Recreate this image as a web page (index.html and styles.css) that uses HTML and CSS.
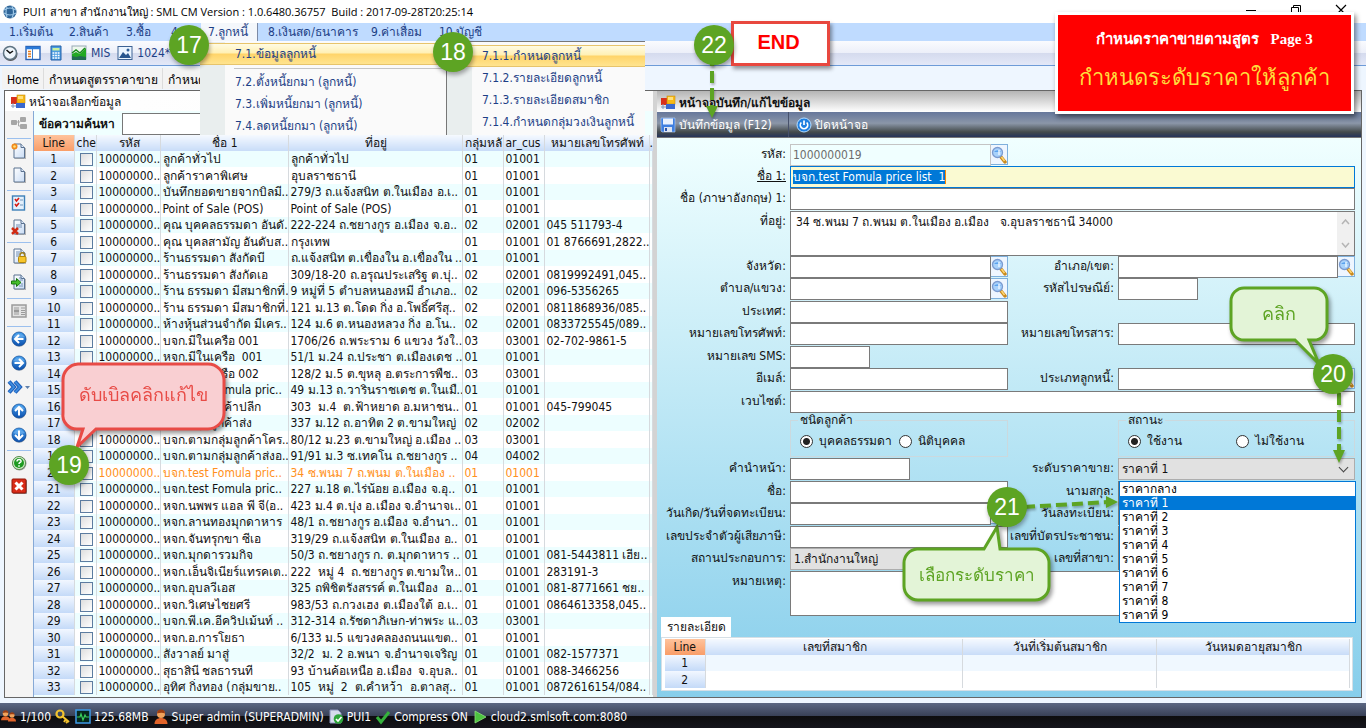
FILE: index.html
```html
<!DOCTYPE html>
<html lang="th">
<head>
<meta charset="utf-8">
<title>PUI1 สาขา สำนักงานใหญ่</title>
<link rel="stylesheet" href="styles.css">
</head>
<body>
<svg class="defs" width="0" height="0" aria-hidden="true">
  <defs>
    <linearGradient id="blue" x2="0" y2="1"><stop offset="0" stop-color="#4aa3ee"/><stop offset="1" stop-color="#0b4fae"/></linearGradient>
    <linearGradient id="paper" x2="1" y2="1"><stop offset="0" stop-color="#fff"/><stop offset="1" stop-color="#c9dcf5"/></linearGradient>
    <symbol id="doc" viewBox="0 0 16 16"><path d="M3 1h7l3.500 3.500V15H3z" fill="url(#paper)" stroke="#5b7290"/><path d="M10 1v3.500h3.500" fill="#dfeafa" stroke="#5b7290"/><path d="M14.500 5v10.800H4" fill="none" stroke="#777" stroke-opacity=".5"/></symbol>
    <symbol id="lens" viewBox="0 0 16 18"><path d="M10 11l4 5" stroke="#c98a1c" stroke-width="3.500" stroke-linecap="round"/><path d="M10.500 11l3 4" stroke="#ffd873" stroke-width="1.500"/><circle cx="6.500" cy="6.500" r="5" fill="#a8d2fb" stroke="#7b9bd0" stroke-width="1.300"/><path d="M3 6a4 3.500 0 0 1 7 0z" fill="#5aa3ee"/><path d="M8 4v5" stroke="#e9f5ff" stroke-width="1.500"/></symbol>
    <symbol id="form" viewBox="0 0 16 16"><rect x="1" y="3" width="6" height="7" fill="#d8301c"/><rect x="7" y="1" width="8" height="8" fill="#f7b916" stroke="#c88c10" stroke-width=".6"/><rect x="6" y="9" width="9" height="5" fill="#3a68cf"/><path d="M1 12h5M3 9v5" stroke="#8096bd"/><rect x="8" y="2" width="5" height="3" fill="#ffe07b"/></symbol>
    <symbol id="ball" viewBox="0 0 16 16"><circle cx="8.300" cy="8.800" r="7" fill="#777" opacity=".5"/><circle cx="8" cy="8" r="7" fill="url(#blue)" stroke="#0a4796" stroke-width=".7"/><path d="M2.500 6a6 5 0 0 1 11 0 9 6 0 0 1-11 0z" fill="#9bd0ff" opacity=".4"/></symbol>
    <symbol id="user" viewBox="0 0 16 16"><circle cx="8" cy="5" r="4" fill="#f0a35c"/><path d="M4 4.500a4 4 0 0 1 8 0c-2-1-5-1-8 0z" fill="#9a3d12"/><path d="M1.500 15c0-4 3-6 6.500-6s6.500 2 6.500 6z" fill="#e2642a"/></symbol>
  </defs>
</svg>

<div class="app">
  <header class="titlebar">
    <svg width="16" height="16" viewBox="0 0 16 16"><circle cx="8" cy="8" r="6.500" fill="#2f6598"/><path d="M2 6q6-4 12 0M2 9q6 4 12 0M5 3q-2 5 0 10M10 2q3 6 0 12" fill="none" stroke="#9cc6e6" stroke-width="1.200"/></svg>
    <h1>PUI1 สาขา สำนักงานใหญ่ : SML CM Version : 1.0.6480.36757&nbsp; Build : 2017-09-28T20:25:14</h1>
    <div class="window-buttons">
      <button aria-label="Minimize"><svg width="12" height="12"><path d="M1 6.500h10" stroke="#000"/></svg></button>
      <button aria-label="Restore"><svg width="12" height="12"><path d="M1.500 3.500h7v7h-7zM3.500 3.500v-2h7v7h-2" fill="none" stroke="#000"/></svg></button>
      <button aria-label="Close"><svg width="12" height="12"><path d="M1 1l10 10M11 1L1 11" stroke="#000" stroke-width="1.200"/></svg></button>
    </div>
  </header>

  <nav class="menubar">
    <button class="m1">1.เริ่มต้น</button><button class="m2">2.สินค้า</button><button class="m3">3.ซื้อ</button><button class="m4">4.</button><button class="m7 open">7.ลูกหนี้</button><button class="m8">8.เงินสด/ธนาคาร</button><button class="m9">9.ค่าเสื่อม</button><button class="m10">10.บัญชี</button>
  </nav>

  <div class="toolbar">
    <button aria-label="Clock"><svg width="16" height="16" viewBox="0 0 16 16"><circle cx="8.500" cy="9" r="7" fill="#555"/><circle cx="8" cy="8" r="6.500" fill="#eef5fb" stroke="#5f7483" stroke-width="1.500"/><path d="M4.500 5L8 8l3-2" fill="none" stroke="#111" stroke-width="1.500"/></svg></button>
    <button aria-label="Panel"><svg width="16" height="16" viewBox="0 0 16 16"><rect x="1" y="1.500" width="14" height="13" fill="#fff" stroke="#2a62b4" stroke-width="1.400"/><path d="M1 3h14" stroke="#2a7ad8" stroke-width="2.500"/><path d="M3 6.500h3M3 9h3M3 11.500h3" stroke="#e67a1a" stroke-width="1.500"/><path d="M7.500 4v10" stroke="#3d7fce"/></svg></button>
    <button aria-label="Calculator"><svg width="16" height="16" viewBox="0 0 16 16"><path d="M3 1h10v14H3z" fill="#4b9ce0" stroke="#2461a8"/><path d="M4.500 3h7v2.500h-7z" fill="#c9f0a0"/><path d="M4.500 8h7M4.500 10.500h7M4.500 13h7" stroke="#fff" stroke-width="1.600" stroke-dasharray="1.800 .8"/></svg></button>
    <button><svg width="16" height="16" viewBox="0 0 16 16"><rect x="1" y="1" width="14" height="13" fill="#eef7ee" stroke="#98a9b5"/><path d="M1 9l4-2 4 2 6-6v11H1z" fill="#22a922"/><path d="M1 11l4 1 4-1 6 1v3H1z" fill="#226c52"/><path d="M1 8l4-3 4 3 5-5" fill="none" stroke="#188c1c" stroke-width="1.500"/></svg>MIS</button>
    <button><svg width="16" height="16" viewBox="0 0 16 16"><rect x="1" y="1.500" width="14" height="13" fill="#eaf4ff" stroke="#3c6294"/><path d="M2 13l4-6 3 3 2-2 3 5z" fill="#27558e"/><circle cx="11" cy="5" r="1.500" fill="#315f99"/></svg>1024*</button>
  </div>

  <div class="tabs" role="tablist">
    <button role="tab">Home</button><button role="tab">กำหนดสูตรราคาขาย</button><button role="tab">กำหนดรู</button>
  </div>

  <main class="workspace">
    <section class="picker">
      <h2 class="picker-title"><svg width="16" height="16"><use href="#form"/></svg>หน้าจอเลือกข้อมูล</h2>
      <div class="picker-body">
        <div class="side-tools">
          <div class="group"><button aria-label="Relations"><svg width="16" height="16" viewBox="0 0 16 16" fill="#a6a6a6"><rect x="0" y="5" width="6" height="5" rx="1"/><rect x="9" y="2" width="6" height="5" rx="1"/><rect x="9" y="9" width="7" height="5" rx="1"/><path d="M6 7h3M7.500 5v6h2" stroke="#a6a6a6" fill="none"/></svg></button></div>
          <div class="group">
            <button aria-label="New"><svg width="16" height="16" viewBox="0 0 16 16"><use href="#doc"/><circle cx="3.500" cy="3.500" r="3" fill="#f28a1c"/><circle cx="3.500" cy="3.500" r="1.300" fill="#ffe37a"/></svg></button>
            <button aria-label="Blank"><svg width="16" height="16"><use href="#doc"/></svg></button>
          </div>
          <div class="group">
            <button aria-label="Select"><svg width="16" height="16" viewBox="0 0 16 16"><rect x="1.500" y="1" width="12" height="14" fill="#e3f0fc" stroke="#3e80b8" stroke-width="1.400"/><path d="M4 4l1.500 2L8 3M4 9l1.500 2L8 8" fill="none" stroke="#d61a10" stroke-width="1.600"/><path d="M9 5h3M9 10h3" stroke="#7396ba"/></svg></button>
            <button aria-label="Delete"><svg width="16" height="16" viewBox="0 0 16 16"><use href="#doc"/><path d="M5 6h6M5 8h6" stroke="#7390b6"/><path d="M1 9l6 6M7 9l-6 6" stroke="#d12a12" stroke-width="2.500"/></svg></button>
          </div>
          <div class="group tall">
            <button aria-label="Lock"><svg width="16" height="16" viewBox="0 0 16 16"><use href="#doc"/><path d="M5 4h4M5 6h5M5 8h3" stroke="#7390b6"/><path d="M9 9V7a2.300 2.300 0 0 1 4.600 0v2" fill="none" stroke="#a2821d" stroke-width="1.400"/><rect x="7.500" y="8.500" width="7.500" height="6" rx="1" fill="#f8c62b" stroke="#b2870c"/></svg></button>
            <button aria-label="Import"><svg width="16" height="16" viewBox="0 0 16 16"><use href="#doc"/><path d="M8 4h3M9 6h3M10 10h2M8 12h4" stroke="#7390b6"/><path d="M.500 7h5V4.500L10 8.500l-4.500 4V10h-5z" fill="#45bd2b" stroke="#18760e"/></svg></button>
          </div>
          <div class="group"><button aria-label="Report"><svg width="16" height="16" viewBox="0 0 16 16"><rect x="1" y="2" width="14" height="12" fill="#e3e3e3" stroke="#9b9b9b" stroke-width="1.500"/><path d="M3 5h5M10 5h4M3 11h5M10 7.500h4M10 9.500h4M10 11.500h4" stroke="#9b9b9b"/><rect x="3" y="6.500" width="5" height="3" fill="#999"/></svg></button></div>
          <div class="group">
            <button aria-label="Previous"><svg width="16" height="16" viewBox="0 0 16 16"><use href="#ball"/><path d="M12.500 8H4.500M8 4L4 8l4 4" fill="none" stroke="#fff" stroke-width="2"/></svg></button>
            <button aria-label="Next"><svg width="16" height="16" viewBox="0 0 16 16"><use href="#ball"/><path d="M3.500 8h8M8 4l4 4-4 4" fill="none" stroke="#fff" stroke-width="2"/></svg></button>
            <button class="more" aria-label="Skip"><svg width="24" height="16" viewBox="0 0 24 16"><path d="M2 2.500L7 8l-5 5.500M8 2.500L13 8l-5 5.500" fill="none" stroke="#205fbb" stroke-width="4"/><path d="M2 2.500L7 8l-5 5.500M8 2.500L13 8l-5 5.500" fill="none" stroke="#3f8fe0" stroke-width="1.800"/><path d="M18 7h5l-2.500 3z" fill="#5d7fab"/></svg></button>
            <button aria-label="Up"><svg width="16" height="16" viewBox="0 0 16 16"><use href="#ball"/><path d="M8 12.500v-8M4 8l4-4 4 4" fill="none" stroke="#fff" stroke-width="2"/></svg></button>
            <button aria-label="Down"><svg width="16" height="16" viewBox="0 0 16 16"><use href="#ball"/><path d="M8 3.500v8M4 8l4 4 4-4" fill="none" stroke="#fff" stroke-width="2"/></svg></button>
          </div>
          <div class="group">
            <button aria-label="Help"><svg width="16" height="16" viewBox="0 0 16 16"><circle cx="8.500" cy="8.500" r="7" fill="#999"/><circle cx="8" cy="8" r="6.500" fill="#d8efcf" stroke="#568b4c"/><circle cx="8" cy="8" r="5" fill="#1d9a20"/><path d="M6 6.500c0-3 4.500-2.500 4 0-.3 1-2 1-2 2.500M8 10.200v1.500" fill="none" stroke="#fff" stroke-width="1.500"/></svg></button>
            <button aria-label="Close list"><svg width="16" height="16" viewBox="0 0 16 16"><rect x="2" y="2" width="14" height="14" rx="1" fill="#888"/><rect x="1" y="1" width="14" height="14" rx="1" fill="#d92c18" stroke="#931608"/><path d="M4.500 4.500l7 7M11.500 4.500l-7 7" stroke="#fff" stroke-width="3"/></svg></button>
          </div>
        </div>
        <div class="list">
          <div class="search"><label for="q">ข้อความค้นหา</label><input id="q" type="text"></div>
          <table class="grid">
            <colgroup><col class="c-line"><col class="c-check"><col class="c-code"><col class="c-name"><col class="c-addr"><col class="c-group"><col class="c-group"><col class="c-phone"><col></colgroup>
            <thead><tr><th class="line">Line</th><th class="left">che</th><th>รหัส</th><th>ชื่อ 1</th><th>ที่อยู่</th><th class="left">กลุ่มหลั</th><th class="left">ar_cus</th><th>หมายเลขโทรศัพท์</th><th class="last">.</th></tr></thead>
            <tbody id="rows"></tbody>
          </table>
        </div>
      </div>
    </section>

    <section class="editor">
      <h2 class="editor-title"><svg width="16" height="16"><use href="#form"/></svg>หน้าจอบันทึก/แก้ไขข้อมูล</h2>
      <div class="editor-tools">
        <button class="save"><svg width="16" height="16" viewBox="0 0 16 16"><path d="M1 1h14v14H2l-1-1z" fill="#3f7fe0" stroke="#b7d0f6" stroke-width=".6"/><rect x="3" y="1.500" width="10" height="6" fill="#e9f2ff"/><rect x="4" y="10" width="8" height="5" fill="#dbe4f2"/><rect x="5" y="11" width="2" height="3" fill="#2a53a8"/></svg>บันทึกข้อมูล (F12)</button>
        <button class="exit"><svg width="16" height="16" viewBox="0 0 16 16"><circle cx="8" cy="8" r="7" fill="#1f7fe0" stroke="#b4dcff"/><path d="M5.300 5.500a3.700 3.700 0 1 0 5.400 0M8 3.500V8" fill="none" stroke="#fff" stroke-width="1.700"/></svg>ปิดหน้าจอ</button>
      </div>
      <form class="form">
        <label for="code">รหัส:</label><div class="lookup"><input id="code" type="text" value="1000000019" disabled><button type="button" aria-label="ค้นหา"><svg width="16" height="18"><use href="#lens"/></svg></button></div><i></i><i></i>
        <label for="name1" class="underlined">ชื่อ 1:</label><div class="wide current" id="name1" role="textbox" contenteditable="true"><mark>บจก.test Fomula price list&nbsp; 1</mark></div>
        <label for="name2">ชื่อ (ภาษาอังกฤษ) 1:</label><input id="name2" class="wide" type="text">
        <label for="addr">ที่อยู่:</label><div class="wide area"><textarea id="addr">34 ซ.พนม 7 ถ.พนม ต.ในเมือง อ.เมือง   จ.อุบลราชธานี 34000</textarea><span class="scroll"><svg width="9" height="6"><path d="M1 5l3.500-4L8 5" fill="none" stroke="#b5b5b5" stroke-width="1.500"/></svg><svg width="9" height="6"><path d="M1 1l3.500 4L8 1" fill="none" stroke="#b5b5b5" stroke-width="1.500"/></svg></span></div>
        <label for="prov">จังหวัด:</label><div class="lookup"><input id="prov" type="text"><button type="button" aria-label="ค้นหา"><svg width="16" height="18"><use href="#lens"/></svg></button></div>
        <label for="amp">อำเภอ/เขต:</label><div class="lookup"><input id="amp" type="text"><button type="button" aria-label="ค้นหา"><svg width="16" height="18"><use href="#lens"/></svg></button></div>
        <label for="tam">ตำบล/แขวง:</label><div class="lookup"><input id="tam" type="text"><button type="button" aria-label="ค้นหา"><svg width="16" height="18"><use href="#lens"/></svg></button></div>
        <label for="zip">รหัสไปรษณีย์:</label><input id="zip" class="short" type="text">
        <label for="country">ประเทศ:</label><input id="country" type="text"><i></i><i></i>
        <label for="tel">หมายเลขโทรศัพท์:</label><input id="tel" type="text"><label for="fax">หมายเลขโทรสาร:</label><input id="fax" type="text">
        <label for="sms">หมายเลข SMS:</label><input id="sms" class="short" type="text"><i></i><i></i>
        <label for="mail">อีเมล์:</label><input id="mail" type="text"><label for="type">ประเภทลูกหนี้:</label><div class="lookup"><input id="type" type="text"><button type="button" aria-label="ค้นหา"><svg width="16" height="18"><use href="#lens"/></svg></button></div>
        <label for="web">เวบไซต์:</label><input id="web" class="wide" type="text">
        <i></i><fieldset><legend>ชนิดลูกค้า</legend><div class="radios"><label class="kind"><input type="radio" name="k" checked>บุคคลธรรมดา</label><label><input type="radio" name="k">นิติบุคคล</label></div></fieldset>
        <i></i><fieldset><legend>สถานะ</legend><div class="radios"><label class="state"><input type="radio" name="s" checked>ใช้งาน</label><label><input type="radio" name="s">ไม่ใช้งาน</label></div></fieldset>
        <label for="pre">คำนำหน้า:</label><input id="pre" class="medium" type="text"><label for="level">ระดับราคาขาย:</label>
        <div class="combo"><select id="level"><option>ราคาที่ 1</option></select>
          <ul class="options" role="listbox" aria-label="ระดับราคาขาย"><li role="option">ราคากลาง</li><li role="option" aria-selected="true">ราคาที่ 1</li><li role="option">ราคาที่ 2</li><li role="option">ราคาที่ 3</li><li role="option">ราคาที่ 4</li><li role="option">ราคาที่ 5</li><li role="option">ราคาที่ 6</li><li role="option">ราคาที่ 7</li><li role="option">ราคาที่ 8</li><li role="option">ราคาที่ 9</li></ul></div>
        <label for="first">ชื่อ:</label><input id="first" type="text"><label for="last">นามสกุล:</label><input id="last" type="text">
        <label for="birth">วันเกิด/วันที่จดทะเบียน:</label><div class="lookup"><input id="birth" type="text"><button type="button" aria-label="ปฏิทิน"></button></div><label for="reg">วันลงทะเบียน:</label><input id="reg" type="text">
        <label for="tax">เลขประจำตัวผู้เสียภาษี:</label><input id="tax" type="text"><label for="cid">เลขที่บัตรประชาชน:</label><input id="cid" type="text">
        <label for="office">สถานประกอบการ:</label><select id="office"><option>1.สำนักงานใหญ่</option></select><label for="branch">เลขที่สาขา:</label><input id="branch" type="text">
        <label for="note">หมายเหตุ:</label><textarea id="note" class="wide"></textarea>
      </form>
      <div class="details">
        <button class="detail-tab">รายละเอียด</button>
        <div class="detail-page">
          <table class="grid members">
            <colgroup><col class="c-line"><col class="w40"><col class="w30"><col class="w30"></colgroup>
            <thead><tr><th class="line">Line</th><th>เลขที่สมาชิก</th><th>วันที่เริ่มต้นสมาชิก</th><th>วันหมดอายุสมาชิก</th></tr></thead>
            <tbody><tr><td class="line">1</td><td></td><td></td><td></td></tr><tr><td class="line">2</td><td></td><td></td><td></td></tr></tbody>
          </table>
        </div>
      </div>
    </section>
  </main>

  <footer class="statusbar">
    <span><svg width="16" height="16" viewBox="0 0 16 16"><use href="#user" x="-1" y="0" width="11" height="13"/><use href="#user" x="6" y="2" width="10" height="12"/></svg>1/100</span>
    <span><svg width="16" height="16" viewBox="0 0 16 16"><circle cx="5" cy="5" r="3.500" fill="none" stroke="#f3c22e" stroke-width="2.200"/><path d="M7 7l7 6M11 10l-2 3M13 12l-2 2" stroke="#f3c22e" stroke-width="2"/></svg></span>
    <span><svg width="16" height="16" viewBox="0 0 16 16"><rect x="1" y="1" width="14" height="13" fill="#06281c" stroke="#3f9be8" stroke-width="1.500"/><path d="M2 8h3l1-3 2 6 2-5 1 2h3" fill="none" stroke="#39d05c" stroke-width="1.200"/></svg>125.68MB</span>
    <span><svg width="16" height="16"><use href="#user"/></svg>Super admin (SUPERADMIN)</span>
    <span><svg width="16" height="16" viewBox="0 0 16 16"><path d="M2 1h8l3 3v10H2z" fill="#d5dbec" stroke="#8a93bb"/><circle cx="10.500" cy="10" r="4.800" fill="#2ea53a"/><path d="M8 10l2 2 3.500-4" fill="none" stroke="#fff" stroke-width="1.600"/></svg>PUI1</span>
    <span><svg width="16" height="16" viewBox="0 0 16 16"><path d="M2 8l4 5L14 3" fill="none" stroke="#35b13c" stroke-width="3"/></svg>Compress ON</span>
    <span><svg width="16" height="16" viewBox="0 0 16 16"><path d="M3 2l11 6-11 6z" fill="#4cc43f" stroke="#8fe07f" stroke-width=".8"/></svg>cloud2.smlsoft.com:8080</span>
  </footer>

  <div class="menu menu-main" role="menu">
    <button role="menuitem" class="active">7.1.ข้อมูลลูกหนี้</button><hr>
    <button role="menuitem">7.2.ตั้งหนี้ยกมา (ลูกหนี้)</button>
    <button role="menuitem">7.3.เพิ่มหนี้ยกมา (ลูกหนี้)</button>
    <button role="menuitem">7.4.ลดหนี้ยกมา (ลูกหนี้)</button>
  </div>
  <div class="menu menu-sub" role="menu">
    <button role="menuitem" class="active">7.1.1.กำหนดลูกหนี้</button>
    <button role="menuitem">7.1.2.รายละเอียดลูกหนี้</button>
    <button role="menuitem">7.1.3.รายละเอียดสมาชิก</button>
    <button role="menuitem">7.1.4.กำหนดกลุ่มวงเงินลูกหนี้</button>
  </div>

  <div class="callout double-click"><svg width="174" height="96" viewBox="0 0 174 96"><path d="M20 5H150A16 16 0 0 1 166 21V54A16 16 0 0 1 150 70H38L19 88L25 70H20A14 14 0 0 1 5 54V21A16 16 0 0 1 20 5Z" fill="#f9cfd2" stroke="#e84b46" stroke-width="3"/></svg><p>ดับเบิลคลิกแก้ไข</p></div>
  <div class="callout click"><svg width="112" height="86" viewBox="0 0 112 86"><path d="M18 5H88A13 13 0 0 1 101 18V44A13 13 0 0 1 88 57H83L93 81L69 57H18A13 13 0 0 1 5 44V18A13 13 0 0 1 18 5Z" fill="#e3f4d7" stroke="#5da423" stroke-width="3"/></svg><p>คลิก</p></div>
  <div class="callout choose"><svg width="160" height="90" viewBox="0 0 160 90"><path d="M18 26H85L98 4L101 26H136A14 14 0 0 1 150 40V63A14 14 0 0 1 136 77H19A14 14 0 0 1 5 63V40A14 14 0 0 1 18 26Z" fill="#e3f4d7" stroke="#5da423" stroke-width="3"/></svg><p>เลือกระดับราคา</p></div>
  <svg class="arrow arrow-save" width="14" height="68" viewBox="0 0 14 68"><path d="M7 0V54" stroke="#5da423" stroke-width="4" stroke-dasharray="12 5"/><path d="M1 52h12L7 64z" fill="#5da423"/></svg>
  <svg class="arrow arrow-level" width="14" height="72" viewBox="0 0 14 72"><path d="M7 0V60" stroke="#5da423" stroke-width="4" stroke-dasharray="12 5"/><path d="M1 57h12L7 70z" fill="#5da423"/></svg>
  <svg class="arrow arrow-option" width="96" height="16" viewBox="0 0 96 16"><path d="M0 10L84 5" stroke="#5da423" stroke-width="4" stroke-dasharray="11 5"/><path d="M82 -1l12 6-12 6z" fill="#5da423"/></svg>
  <b class="step s17">17</b><b class="step s18">18</b><b class="step s19">19</b><b class="step s20">20</b><b class="step s21">21</b><b class="step s22">22</b>
  <div class="end">END</div>
  <div class="banner"><p>กำหนดราคาขายตามสูตร &nbsp; Page 3</p><p class="topic">กำหนดระดับราคาให้ลูกค้า</p></div>
</div>
<script src="rows.js"></script>
</body>
</html>
```
FILE: styles.css
```css
* { box-sizing: border-box; }
body { margin: 0; font: 12px/16px "DejaVu Sans Condensed", "Noto Sans", sans-serif; color: #111; overflow: hidden; }
button, input, select, textarea { font: inherit; color: inherit; margin: 0; border-radius: 0; }
button { background: none; border: 0; padding: 0; white-space: nowrap; }
p, h1, h2, ul { margin: 0; padding: 0; font: inherit; list-style: none; }
svg { flex: none; }
.defs { position: absolute; }
.app { position: relative; height: 100vh; display: flex; flex-direction: column; background: #eef6ff; overflow: hidden; }

.titlebar { flex: none; height: 23px; background: #fff; display: flex; align-items: center; padding: 0 19px 0 2px; gap: 5px; }
.titlebar h1 { font: 11px/20px "Open Sans", sans-serif; flex: 1; white-space: nowrap; color: #000; }
.window-buttons { display: flex; gap: 33px; align-self: flex-start; padding-top: 4px; }
.window-buttons button { height: 12px; }
.window-buttons svg { display: block; }

.menubar { flex: none; height: 18px; background: #bfdbff; color: #1d3f86; display: flex; padding-left: 9px; overflow: hidden; }
.menubar button { text-align: left; line-height: 18px; }
.menubar .m1 { width: 60px; }
.menubar .m2 { width: 57px; }
.menubar .m3 { width: 45px; }
.menubar .m4 { width: 30px; }
.menubar .m7 { width: 57px; }
.menubar .m8 { width: 113px; padding-left: 10px; }
.menubar .m9 { width: 68px; }
.menubar .open { background: #f4f7fb; padding-left: 7px; border-right: 1px solid #7c8aa5; }

.toolbar { flex: none; height: 25px; display: flex; align-items: center; gap: 7px; padding-left: 2px; color: #1d3f86; border-bottom: 1px solid #6d9bd8; background: linear-gradient(#fafbfe, #eceff9 50%, #d5dbee 52%, #e3e8f8); }
.toolbar button { display: flex; align-items: center; gap: 4px; }

.tabs { flex: none; height: 23px; display: flex; background: #eef6ff; padding-left: 2px; }
.tabs button { height: 21px; margin-top: 2px; padding: 3px 4px 0 5px; background: #f3f3f3; border-right: 1px solid #dcdcdc; color: #000; }

.workspace { flex: 1; min-height: 0; display: flex; margin: 1px 4px 0; border: 1px solid #666; background: #f0f0f0; }
.picker { flex: none; width: 648px; display: flex; flex-direction: column; background: #f0ffff; overflow: hidden; }
.picker-title { flex: none; height: 20px; display: flex; align-items: center; gap: 3px; padding: 2px 0 0 5px; background: linear-gradient(90deg, #fff, #fafafa); }
.picker-body { flex: 1; min-height: 0; display: flex; }
.side-tools { flex: none; width: 29px; background: #f4f4f4; border-right: 1px solid #86a9d6; padding-left: 2px; }
.group { display: flex; flex-direction: column; padding: 0 0 3px; border-bottom: 1px solid #9cc0ee; width: 24px; }
.group:last-child { border: 0; }
.group button { height: 24px; display: flex; align-items: center; justify-content: center; }
.group:last-child button { height: 23px; }
.group.tall button { height: 26px; }
.group .more { justify-content: flex-start; }
.list { flex: 1; min-width: 0; }
.search { height: 24px; display: flex; align-items: center; padding: 1px 0 0 5px; gap: 7px; font-weight: bold; }
.search input { width: 300px; height: 22px; border: 1px solid #777; background: #fff; }

.grid { width: 100%; table-layout: fixed; border-collapse: collapse; }
.grid th, .grid td { padding: 0 0 0 2px; height: 16px; line-height: 16px; white-space: nowrap; overflow: hidden; border-right: 1px solid #d6dade; text-align: left; }
.grid th { font-weight: normal; text-align: center; background: linear-gradient(#f5f9ff, #c8dcf8); }
.grid th.left { text-align: left; }
.grid th.last { padding: 0; border: 0; }
.grid th.line { background: linear-gradient(#ffc39c, #f99d68); }
.grid .line { text-align: center; padding: 0; }
.grid td.line { background: linear-gradient(#f2f7ff, #c4daf8); }
.grid tbody tr { background: #fff; }
.grid tbody tr:nth-child(odd) { background: #edfeff; }
.grid tbody tr:nth-child(even) td { height: 17px; }
.grid .chosen td:not(.line) { color: #ff9020; }
.grid input { appearance: none; display: block; width: 13px; height: 13px; margin: 1px 0 0 3px; border: 1px solid #5c7ca0; background: linear-gradient(135deg, #dedede, #fff); }
.c-line { width: 40px; }
.c-check { width: 22px; }
.c-code { width: 64px; }
.c-name { width: 128px; }
.c-addr { width: 174px; }
.c-group { width: 41px; }
.c-phone { width: 105px; }

.editor { flex: 1; min-width: 0; display: flex; flex-direction: column; border-left: 4px solid #d3d3d3; background: linear-gradient(#f0ffff 8%, #87ceeb); }
.editor-title { flex: none; height: 21px; display: flex; align-items: center; gap: 3px; padding: 2px 0 0 3px; font-weight: bold; background: linear-gradient(#b4b4b4, #fff); }
.editor-tools { flex: none; height: 26px; display: flex; color: #fff; background: linear-gradient(#66779b, #8b96a8 45%, #444b4c 80%, #26345a); border-bottom: 1px solid #777; }
.editor-tools button { display: flex; align-items: center; gap: 3px; padding-left: 3px; }
.editor-tools .save { width: 132px; border-right: 1px solid #47516b; }
.editor-tools .exit { padding-left: 7px; }

.form { flex: none; display: grid; grid-template-columns: 133px 218fr 110px 237fr; grid-template-rows: 22px 22px 23px 45px 22px 23px 22px 23px 22px 23px 22px 45px 23px 22px 23px 22px 23px 46px; padding: 6px 6px 0 0; }
.form > label { text-align: right; padding: 2px 4px 0 0; white-space: nowrap; }
.form .underlined { text-decoration: underline; }
.form > input, .form select, .form .area, .form > textarea, .current { width: 100%; height: 22px; border: 1px solid #7a7a7a; background: #fff; padding: 0 3px; min-width: 0; }
.form .wide { grid-column: 2 / 5; }
.form .short { width: 80px; }
.form .medium { width: 120px; }
.form .current { background: #fafad2; border-color: #0078d7; padding: 2px; white-space: nowrap; outline: 0; }
.current mark { background: #0078d7; color: #fff; border-right: 1px solid #f80; }
.form .area { height: 45px; padding: 0; display: flex; }
.area textarea { flex: 1; border: 0; padding: 2px 5px; resize: none; outline: 0; }
.scroll { width: 17px; background: #f0f0f0; display: flex; flex-direction: column; justify-content: space-between; align-items: center; padding: 7px 0; }
.form > textarea { height: 45px; resize: none; }
.lookup { display: flex; min-width: 0; height: 22px; }
.lookup input { flex: 1; min-width: 0; border: 1px solid #7a7a7a; background: #fff; padding: 0 2px; }
.lookup input:disabled { background: #f0ffff; border-color: #c4c4c4; color: #6d6d6d; }
.lookup button { width: 17px; height: 21px; background: #eef6ff; border: 1px solid #7eb0dc; border-left: 0; }
.lookup svg { display: block; }
fieldset { margin: 0; min-width: 0; height: 44px; border: 1px solid #cbd9de; padding: 0 0 0 9px; }
legend { padding: 0 2px; line-height: 14px; margin-left: -2px; }
.radios { display: flex; padding-top: 6px; }
.radios label { display: flex; align-items: center; gap: 6px; white-space: nowrap; }
.radios .kind { width: 99px; }
.radios .state { width: 108px; }
.radios input { appearance: none; width: 13px; height: 13px; border: 1px solid #333; border-radius: 50%; background: #fff; }
.radios input:checked { background: radial-gradient(#222 0 3px, #fff 4px); }
.form select { appearance: none; background: #e1e1e1; border-color: #adadad; }
.combo { position: relative; }
.combo::after { content: ""; position: absolute; right: 8px; top: 6px; width: 6px; height: 6px; border: solid #444; border-width: 0 1px 1px 0; transform: rotate(45deg); }
.options { position: absolute; z-index: 2; left: 1px; right: -1px; top: 23px; border: 1px solid #0078d7; background: #fff; color: #000; }
.options li { height: 14px; line-height: 14px; padding-left: 2px; }
.options [aria-selected] { background: #0078d7; color: #fff; }

.details { padding: 0 8px 0 4px; }
.detail-tab { display: block; height: 20px; width: 70px; background: #fff; }
.detail-page { background: #fff; border: 1px solid #d5dfe6; padding: 1px 2px 2px 3px; }
.members tbody tr:nth-child(odd) { background: #f0f8ff; }
.w40 { width: 40%; }
.w30 { width: 30%; }

.statusbar { flex: none; height: 25px; margin-top: 5px; display: flex; align-items: center; color: #fff; padding: 3px 0 0 1px; background: linear-gradient(#5b6783, #3a4258 50%, #0d0d0e 52%, #15151c); white-space: nowrap; }
.statusbar span { display: flex; align-items: center; gap: 3px; margin-right: 4px; }

.menu { position: absolute; z-index: 3; overflow: hidden; background: linear-gradient(90deg, #e9eeee 25px, #fafafa 25px); color: #1d3f86; }
.menu button { display: block; width: 100%; height: 22px; text-align: left; padding-left: 35px; }
.menu .active { background: linear-gradient(#fffbe3, #fff0b4 45%, #ffd469 50%, #ffe48f); border: 1px solid #e7c46b; border-width: 1px 0; }
.menu hr { margin: 3px 0 2px 34px; border: 0; border-top: 1px solid #c5c5c5; height: 1px; }
.menu-main { left: 200px; top: 42px; width: 247px; height: 93px; border-right: 1px solid #777; padding-top: 1px; }
.menu-sub { left: 447px; top: 41px; width: 198px; height: 94px; border-top: 1px solid #777; padding-top: 3px; }

.step { position: absolute; z-index: 6; width: 40px; height: 40px; border-radius: 50%; background: #5da423; color: #fff; font: 23px/40px "Liberation Sans", sans-serif; text-align: center; box-shadow: 1px 3px 4px #0005; }
.s17 { left: 169px; top: 25px; }
.s18 { left: 433px; top: 32px; }
.s19 { left: 49px; top: 445px; }
.s20 { left: 1313px; top: 354px; }
.s21 { left: 987px; top: 487px; }
.s22 { left: 694px; top: 25px; }
.callout { position: absolute; z-index: 5; display: flex; justify-content: center; color: #5da423; font-size: 18px; line-height: 24px; filter: drop-shadow(2px 3px 2px #0006); }
.callout svg { position: absolute; left: 0; top: 0; }
.callout p { position: relative; }
.double-click { left: 58px; top: 359px; width: 170px; padding-top: 24px; color: #e84b46; }
.click { left: 1226px; top: 283px; width: 106px; padding-top: 19px; }
.choose { left: 899px; top: 523px; width: 155px; padding-top: 40px; font-size: 17px; }
.arrow { position: absolute; z-index: 5; filter: drop-shadow(1px 2px 1px #0004); overflow: visible; }
.arrow-save { left: 705px; top: 54px; }
.arrow-level { left: 1332px; top: 393px; }
.arrow-option { left: 1024px; top: 497px; }
.end { position: absolute; z-index: 5; left: 731px; top: 21px; width: 99px; height: 45px; border: 3px solid #e8483f; background: #fff; color: #f00; font: bold 20px/37px "Liberation Sans", sans-serif; text-align: center; padding-right: 4px; box-shadow: 2px 3px 4px #0006; }
.banner { position: absolute; z-index: 5; left: 1055px; top: 12px; width: 299px; height: 102px; border: 3px solid #fff; background: #f00; color: #fff; font: bold 15px/24px "Liberation Serif", serif; text-align: center; padding-top: 12px; box-shadow: 2px 3px 5px #0007; white-space: nowrap; }
.banner .topic { color: #ffdc3c; font-size: 22px; font-weight: normal; line-height: 34px; margin-top: 10px; }
```
FILE: rows.js
```js
const customers = [
  ["ลูกค้าทั่วไป", "ลูกค้าทั่วไป", "01", "01001", ""],
  ["ลูกค้าราคาพิเศษ", "อุบลราชธานี", "01", "01001", ""],
  ["บันทึกยอดขายจากบิลมี..", "279/3 ถ.แจ้งสนิท ต.ในเมือง อ.เ..", "01", "01001", ""],
  ["Point of Sale (POS)", "Point of Sale (POS)", "01", "01001", ""],
  ["คุณ บุคคลธรรมดา อันดั..", "222-224 ถ.ชยางกูร อ.เมือง จ.อ..", "02", "02001", "045 511793-4"],
  ["คุณ บุคลสามัญ อันดับส..", "กรุงเทพ", "01", "01001", "01 8766691,2822.."],
  ["ร้านธรรมดา สังกัดบี", "ถ.แจ้งสนิท ต.เขื่องใน อ.เขื่องใน ..", "01", "01001", ""],
  ["ร้านธรรมดา สังกัดเอ", "309/18-20 ถ.อรุณประเสริฐ ต.บุ่..", "02", "02001", "0819992491,045.."],
  ["ร้าน ธรรมดา มีสมาชิกที่..", "9 หมู่ที่ 5 ตำบลหนองหมี อำเภอ..", "02", "02001", "096-5356265"],
  ["ร้าน ธรรมดา มีสมาชิกที่..", "121 ม.13 ต.โดด กิ่ง อ.โพธิ์ศรีสุ..", "02", "02001", "0811868936/085.."],
  ["ห้างหุ้นส่วนจำกัด มีเคร..", "124 ม.6 ต.หนองหลวง กิ่ง อ.โน..", "02", "02001", "0833725545/089.."],
  ["บจก.มีในเครือ 001", "1706/26 ถ.พระราม 6 แขวง วังใ..", "03", "03001", "02-702-9861-5"],
  ["หจก.มีในเครือ  001", "51/1 ม.24 ถ.ประชา ต.เมืองเดช ..", "01", "01001", ""],
  ["หจก.มีในเครือ 002", "128/2 ม.5 ต.ขุหลุ อ.ตระการพืช..", "03", "03001", ""],
  ["บจก.test Fomula pric..", "49 ม.13 ถ.วารินราชเดช ต.ในเมื..", "01", "01001", ""],
  ["บจก.กลุ่มลูกค้าปลีก", "303  ม.4  ต.ฟ้าหยาด อ.มหาชน..", "01", "01001", "045-799045"],
  ["บจก.กลุ่มลูกค้าส่ง", "337 ม.12 ถ.อาทิต 2 ต.ขามใหญ่  .", "02", "02002", ""],
  ["บจก.ตามกลุ่มลูกค้าโคร..", "80/12 ม.23 ต.ขามใหญ่ อ.เมือง ..", "03", "03001", ""],
  ["บจก.ตามกลุ่มลูกค้าส่งอ..", "91/91 ม.3 ซ.เทคโน ถ.ชยางกูร ..", "04", "04002", ""],
  ["บจก.test Fomula pric..", "34 ซ.พนม 7 ถ.พนม ต.ในเมือง ..", "01", "01001", ""],
  ["บจก.test Fomula pric..", "227 ม.18 ต.ไร่น้อย อ.เมือง จ.อุ..", "01", "01001", ""],
  ["หจก.นพพร แอล พี จี(อ..", "423 ม.4 ต.บุ่ง อ.เมือง จ.อำนาจเ..", "01", "01001", ""],
  ["หจก.ลานทองมุกดาหาร", "48/1 ถ.ชยางกูร อ.เมือง จ.อำนา..", "01", "01001", ""],
  ["หจก.จันทรุกขา ซีเอ", "319/29 ถ.แจ้งสนิท ต.ในเมือง อ..", "01", "01001", ""],
  ["หจก.มุกดารวมกิจ", "50/3 ถ.ชยางกูร ก. ต.มุกดาหาร ..", "01", "01001", "081-5443811 เฮีย.."],
  ["หจก.เอ็นจิเนียร์แทรคเต..", "222  หมู่ 4  ถ.ชยางกูร ต.ขามให..", "01", "01001", "283191-3"],
  ["หจก.อุบลวีเอส", "325 ถพิชิตรังสรรค์ ต.ในเมือง  อ...", "01", "01001", "081-8771661 ชย.."],
  ["หจก.วิเศษไชยศรี", "983/53 ถ.กวงเฮง ต.เมืองใต้ อ.เ..", "01", "01001", "0864613358,045.."],
  ["บจก.พี.เค.อีควิปเม้นท์ ..", "312-314 ถ.รัชดาภิเษก-ท่าพระ แ..", "03", "03001", ""],
  ["หจก.อ.การโยธา", "6/133 ม.5 แขวงคลองถนนแขต..", "01", "01001", ""],
  ["สังวาลย์ มาสู่", "32/2  ม. 2 อ.พนา จ.อำนาจเจริญ", "01", "01001", "082-1577371"],
  ["สุธาสินี ชลธารนที", "93 บ้านค้อเหนือ อ.เมือง  จ.อุบล..", "01", "01001", "088-3466256"],
  ["อุทิศ กิ่งทอง (กลุ่มขาย..", "105  หมู่  2  ต.คำหว้า   อ.ตาลสุ..", "01", "01001", "0872616154/084.."]
];
document.getElementById("rows").innerHTML = customers.map((c, i) => {
  const cells = c.map(t => `<td>${t.replace(/  /g, "&nbsp; ")}</td>`).join("");
  return `<tr${i === 19 ? ' class="chosen"' : ""}><td class="line">${i + 1}</td><td><input type="checkbox" aria-label="${i + 1}"></td><td>10000000..</td>${cells}<td></td></tr>`;
}).join("");
```
